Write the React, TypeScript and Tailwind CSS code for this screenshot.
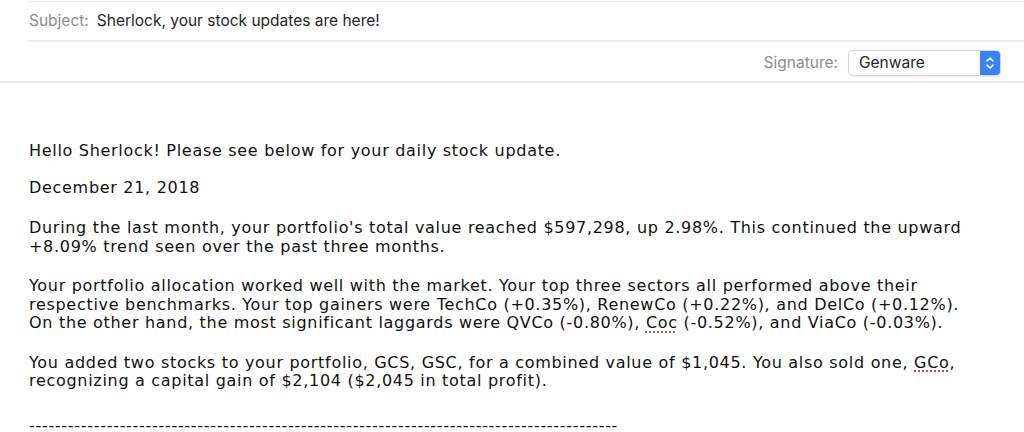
import React from "react";

export default function App() {
  const body = { fontFamily: '"DejaVu Sans", Verdana, sans-serif' } as React.CSSProperties;
  const ui = { fontFamily: 'Inter, "Liberation Sans", sans-serif' } as React.CSSProperties;
  return (
    <div className="w-[1024px] h-[432px] bg-white overflow-hidden relative">
      <div className="ml-[28px] mt-[1px] border-t border-[#e6e6e6]" />
      <div className="ml-[28px] h-[40px] flex items-center border-b-2 border-[#ececec] text-[15.5px]" style={ui}>
        <span className="text-[#8c8c8c] pl-[1px]">Subject:</span>
        <span className="text-[#262626] ml-[8px]">Sherlock, your stock updates are here!</span>
      </div>
      <div className="h-[41px] pt-[2px] flex items-center justify-end border-b-2 border-[#ececec] pr-[23px]" style={ui}>
        <span className="text-[15.5px] text-[#8c8c8c] mr-[10px]">Signature:</span>
        <div className="w-[153px] h-[26px] rounded-[5px] border border-[#d8d8d8] shadow-[0_1px_1px_rgba(0,0,0,0.08)] flex items-stretch overflow-hidden">
          <span className="flex-1 flex items-center pl-[10px] text-[15.5px] text-[#262626]">Genware</span>
          <span className="w-[20px] bg-[#3b82f6] flex items-center justify-center">
            <svg width="10" height="16" viewBox="0 0 10 16" fill="none" stroke="white" strokeWidth="1.6" strokeLinecap="round" strokeLinejoin="round">
              <path d="M2 6 L5 3 L8 6" />
              <path d="M2 10 L5 13 L8 10" />
            </svg>
          </span>
        </div>
      </div>
      <div className="pl-[29px] pt-[59px] text-[16px] leading-[18.5px] tracking-[0.7px] text-[#111]" style={body}>
        <p>Hello Sherlock! Please see below for your daily stock update.</p>
        <p className="mt-[18px]">December 21, 2018</p>
        <p className="mt-[22px]">
          During the last month, your portfolio's total value reached $597,298, up 2.98%. This continued the upward
          <br />+8.09% trend seen over the past three months.
        </p>
        <p className="mt-[21px]">
          Your portfolio allocation worked well with the market. Your top three sectors all performed above their
          <br />respective benchmarks. Your top gainers were TechCo (+0.35%), RenewCo (+0.22%), and DelCo (+0.12%).
          <br />On the other hand, the most significant laggards were QVCo (-0.80%),{" "}
          <span className="underline decoration-dotted decoration-[#e0443a] decoration-2 underline-offset-[3px]">Coc</span> (-0.52%), and ViaCo (-0.03%).
        </p>
        <p className="mt-[21px]">
          You added two stocks to your portfolio, GCS, GSC, for a combined value of $1,045. You also sold one,{" "}
          <span className="underline decoration-dotted decoration-[#e0443a] decoration-2 underline-offset-[3px]">GCo</span>,
          <br />recognizing a capital gain of $2,104 ($2,045 in total profit).
        </p>
        <p className="mt-[29px] leading-[12px] whitespace-nowrap">-------------------------------------------------------------------------------------------</p>
      </div>
    </div>
  );
}
